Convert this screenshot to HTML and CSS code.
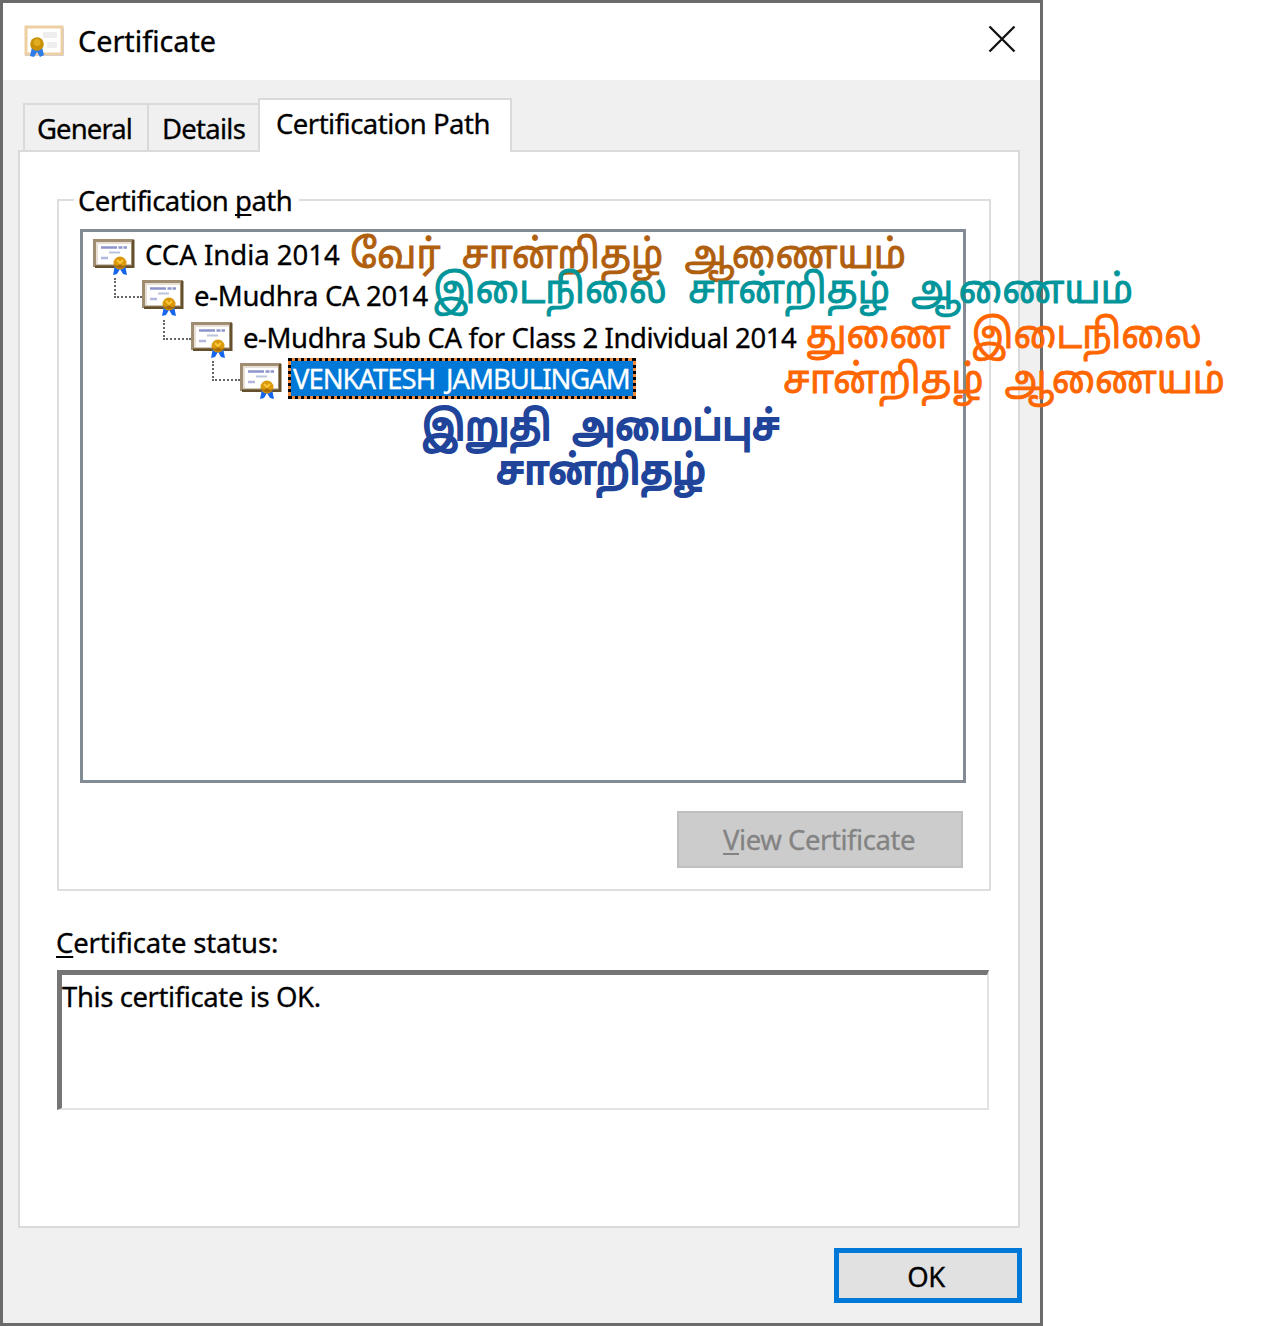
FILE: index.html
```html
<!DOCTYPE html>
<html lang="en">
<head>
<meta charset="utf-8">
<title>Certificate</title>
<link rel="stylesheet" href="styles.css">
</head>
<body>
<svg width="0" height="0" class="defs">
  <defs>
    <symbol id="cert" viewBox="0 0 42 40">
      <path d="M0 1h41v28H0z" fill="#a08c70"/>
      <path d="M39 2h2.500v28H2v-2.500h37z" fill="#65502e"/>
      <path d="M3 4h35v22.500H3z" fill="#fff"/>
      <path d="M3 4h35v2H5v20H3z" fill="#e8dfd5"/>
      <path d="M8 9.500h26" stroke="#8e95cc" stroke-width="2.500" stroke-dasharray="16 1.500 4 1"/>
      <path d="M16 14.500h11" stroke="#bcc4dc" stroke-width="2"/>
      <path d="M8 20h7" stroke="#b1b7df" stroke-width="2.500"/>
      <path d="M22 27l-2 10 4-1 3-5 3 5 4 1-2-10z" fill="#1767ee"/>
      <circle cx="27" cy="25" r="6.500" fill="#d89a09"/>
      <path d="M21 26a6.500 6.500 0 0 0 12 1l-3 1-3-2-3 2z" fill="#a96c05"/>
      <path d="M24 22l3 3 3-3" fill="none" stroke="#ffc63a" stroke-width="2"/>
    </symbol>
  </defs>
</svg>
<main class="window">
  <header class="titlebar">
    <svg class="title-icon" viewBox="0 0 40 36">
      <path d="M2 3h36v27H2z" fill="#fff" stroke="#edcfa2" stroke-width="3"/>
      <path d="M1 31.500h38.500V4" fill="none" stroke="#d8d0c8" stroke-width="1"/>
      <path d="M19 8h14v6H19zM23 18h10v6H23z" fill="#eee"/>
      <path d="M8 23l-2 9 4 1 3-5 3 5 4-2-2-8z" fill="#2f7bea"/>
      <circle cx="13" cy="20" r="6.800" fill="#c89106"/>
      <circle cx="13" cy="18.500" r="3.500" fill="#e0ad22"/>
    </svg>
    <span class="title">Certificate</span>
    <svg class="close" viewBox="0 0 28 28"><path d="M1.500 1.500l25 25M26.500 1.500l-25 25" stroke="#111" stroke-width="2.300"/></svg>
  </header>
  <nav class="tabs">
    <div class="tab general">General</div>
    <div class="tab details">Details</div>
    <div class="tab active">Certification Path</div>
  </nav>
  <section class="panel">
    <div class="group">
      <div class="legend"><span>Certification <u>p</u>ath</span></div>
      <div class="list">
        <div class="row"><svg class="icon"><use href="#cert"/></svg><span class="label">CCA India 2014</span></div>
        <div class="row lv1"><i class="branch"></i><svg class="icon"><use href="#cert"/></svg><span class="label">e-Mudhra CA 2014</span></div>
        <div class="row lv2"><i class="branch"></i><svg class="icon"><use href="#cert"/></svg><span class="label">e-Mudhra Sub CA for Class 2 Individual 2014</span></div>
        <div class="row lv3"><i class="branch"></i><svg class="icon"><use href="#cert"/></svg><span class="label selected">VENKATESH JAMBULINGAM</span></div>
      </div>
      <div class="view"><u>V</u>iew Certificate</div>
    </div>
    <div class="status-label"><u>C</u>ertificate status:</div>
    <div class="status">This certificate is OK.</div>
  </section>
  <footer class="footer"><div class="ok">OK</div></footer>
</main>
<svg class="notes" width="1263" height="1326" lang="ta">
  <text class="root" x="350" y="268" textLength="556" lengthAdjust="spacingAndGlyphs">வேர் சான்றிதழ் ஆணையம்</text>
  <text class="middle" x="433" y="303" textLength="700" lengthAdjust="spacingAndGlyphs">இடைநிலை சான்றிதழ் ஆணையம்</text>
  <text class="sub" x="806" y="348" textLength="396" lengthAdjust="spacingAndGlyphs">துணை இடைநிலை</text>
  <text class="sub" x="783" y="393" textLength="442" lengthAdjust="spacingAndGlyphs">சான்றிதழ் ஆணையம்</text>
  <text class="end" x="422" y="439.500" textLength="358" lengthAdjust="spacingAndGlyphs">இறுதி அமைப்புச்</text>
  <text class="end" x="496" y="483.500" textLength="210" lengthAdjust="spacingAndGlyphs">சான்றிதழ்</text>
</svg>
</body>
</html>
```
FILE: styles.css
```css
* { box-sizing: border-box; }
body {
  margin: 0;
  width: 1263px;
  height: 1326px;
  background: #fff;
  color: #000;
  font: 27.500px/34px "Noto Sans", "Open Sans", sans-serif;
  -webkit-text-stroke: 0.300px currentColor;
  white-space: nowrap;
  position: relative;
  overflow: hidden;
}
.defs { position: absolute; }
u {
  text-decoration-thickness: 2px;
  text-underline-offset: 3px;
  text-decoration-skip-ink: none;
}
.window {
  width: 1043px;
  height: 1326px;
  border: 3px solid #6b6b6b;
  background: #f0f0f0;
  display: flex;
  flex-direction: column;
}
.titlebar {
  height: 77px;
  flex: none;
  background: #fff;
  display: flex;
  align-items: flex-start;
  padding: 21px 24px 0 21px;
}
.title-icon { width: 40px; height: 36px; }
.title { margin: 0 auto 0 14px; font-size: 28.800px; }
.close { width: 28px; height: 28px; margin-top: 1px; }
.tabs {
  display: flex;
  align-items: flex-end;
  height: 73px;
  flex: none;
  padding-left: 20px;
}
.tab {
  height: 49px;
  border: 2px solid #dadada;
  border-bottom: 0;
  padding: 7px 0 0 12px;
  margin-bottom: 1px;
}
.general { width: 126px; letter-spacing: -0.900px; }
.details { width: 112px; border-left: 0; padding-left: 13px; letter-spacing: -0.750px; }
.tab.active {
  width: 254px;
  height: 54px;
  margin-left: -3px;
  background: #fff;
  z-index: 1;
  padding: 7px 0 0 16px;
  letter-spacing: -0.520px;
}
.panel {
  width: 1002px;
  height: 1078px;
  flex: none;
  margin: -3px 0 0 15px;
  border: 2px solid #dadada;
  background: #fff;
  padding: 47px 26px 0 37px;
}
.group {
  width: 934px;
  height: 692px;
  border: 2px solid #dedede;
  padding: 0 26px 0 21px;
}
.legend { height: 28px; margin-left: -6px; letter-spacing: -0.520px; }
.legend span { display: inline-block; position: relative; top: -17px; background: #fff; padding: 0 7px 0 4px; }
.list {
  width: 886px;
  height: 554px;
  border: 3px solid #828a93;
  padding: 3px 0 0 10px;
}
.row { display: flex; height: 41.300px; align-items: flex-start; padding-top: 2px; }
.icon { width: 42px; height: 40px; flex: none; margin-top: 1px; }
.label { margin: 1px 0 0 10px; }
.lv1 { padding-left: 21px; letter-spacing: -0.300px; }
.lv2 { padding-left: 70px; letter-spacing: -0.400px; }
.lv3 { padding-left: 119px; letter-spacing: -1.050px; word-spacing: 5px; }
.branch {
  width: 28px;
  height: 20px;
  border-left: 2px dotted #666;
  border-bottom: 2px dotted #666;
}
.selected {
  margin: -3px 0 0 6px;
  width: 348px;
  height: 41px;
  border: 3px dotted #000;
  background:
    linear-gradient(#0078d7, #0078d7) padding-box,
    linear-gradient(#f08a3c, #f08a3c) border-box;
  color: #fff;
  padding: 1px 0 0 2px;
}
.view {
  width: 286px;
  height: 57px;
  margin: 28px 0 0 auto;
  border: 2px solid #bfbfbf;
  background: #ccc;
  color: #838383;
  text-align: center;
  padding: 10px 2px 0 0;
  letter-spacing: -0.450px;
}
.status-label { margin: 35px 0 0 -1px; letter-spacing: -0.150px; }
.status {
  width: 932px;
  height: 140px;
  margin-top: 10px;
  border: 2px solid #e3e3e3;
  border-top: 5px solid #757575;
  border-left: 5px solid #757575;
  padding: 5px 0 0;
  letter-spacing: -0.400px;
}
.footer { display: flex; justify-content: flex-end; padding: 20px 18px 0 0; }
.ok {
  width: 188px;
  height: 55px;
  border: 5px solid #0078d7;
  background: #e1e1e1;
  text-align: center;
  padding: 7px 4px 0 0;
  letter-spacing: -0.500px;
}
.notes {
  position: absolute;
  left: 0;
  top: 0;
  font: 40px "Noto Sans Tamil", "Latha", "Noto Sans", sans-serif;
  word-spacing: 12px;
}
.notes text { -webkit-text-stroke: 0; stroke-width: 0.900px; }
.notes .root { fill: #b05f0e; stroke: #b05f0e; }
.notes .middle { fill: #00959a; stroke: #00959a; }
.notes .sub { fill: #ff6600; stroke: #ff6600; }
.notes .end { fill: #20449a; stroke: #20449a; stroke-width: 1.800px; font-weight: 500; }
```
